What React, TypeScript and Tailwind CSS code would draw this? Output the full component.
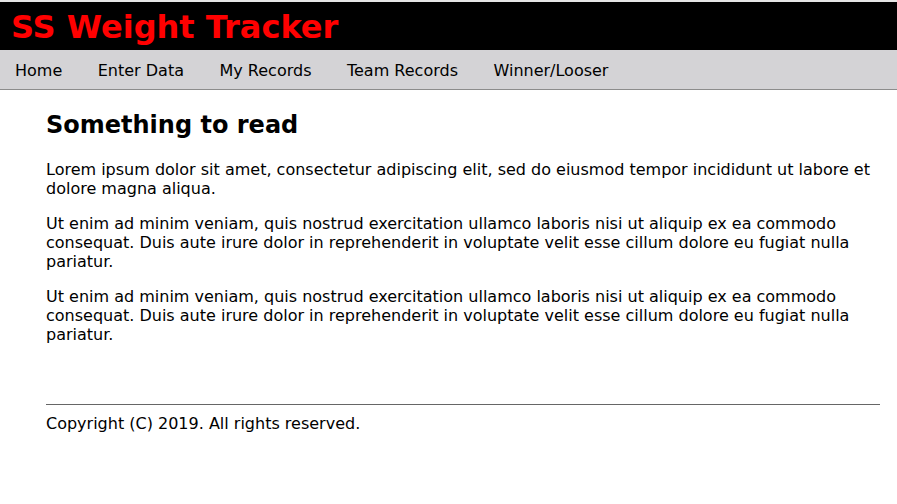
export default function App() {
  const navItems = ['Home', 'Enter Data', 'My Records', 'Team Records', 'Winner/Looser'];

  return (
    <div className="min-h-screen bg-white text-black leading-[normal]" style={{ fontFamily: '"DejaVu Sans", sans-serif' }}>
      <div className="h-[2px] bg-[#e4e4e4]"></div>
      <header className="bg-black h-[48px] flex items-center px-[11px] pt-[1px]">
        <h1 className="text-[32px] font-bold text-[#ff0000] leading-none">SS Weight Tracker</h1>
      </header>
      <nav className="bg-[#d4d3d6] h-[40px] border-b border-[#8c8c8c] flex items-center pl-[15px] pt-[2px] gap-[35.5px] text-base">
        {navItems.map((item) => (
          <a key={item} className="cursor-pointer">
            {item}
          </a>
        ))}
      </nav>

      <main className="ml-[46px] mr-[17px]">
        <h2 className="text-2xl font-bold mt-[21px] mb-[21px] leading-[normal]">Something to read</h2>
        <p className="my-4">
          Lorem ipsum dolor sit amet, consectetur adipiscing elit, sed do eiusmod tempor incididunt ut labore et dolore magna aliqua.
        </p>
        <p className="my-4">
          Ut enim ad minim veniam, quis nostrud exercitation ullamco laboris nisi ut aliquip ex ea commodo consequat. Duis aute irure dolor in reprehenderit in voluptate velit esse cillum dolore eu fugiat nulla pariatur.
        </p>
        <p className="my-4">
          Ut enim ad minim veniam, quis nostrud exercitation ullamco laboris nisi ut aliquip ex ea commodo consequat. Duis aute irure dolor in reprehenderit in voluptate velit esse cillum dolore eu fugiat nulla pariatur.
        </p>
      </main>

      <footer className="ml-[46px] mr-[17px] mt-[60px]">
        <hr className="border-t border-[#666666]" />
        <p className="mt-[9px]">Copyright (C) 2019. All rights reserved.</p>
      </footer>
    </div>
  );
}
